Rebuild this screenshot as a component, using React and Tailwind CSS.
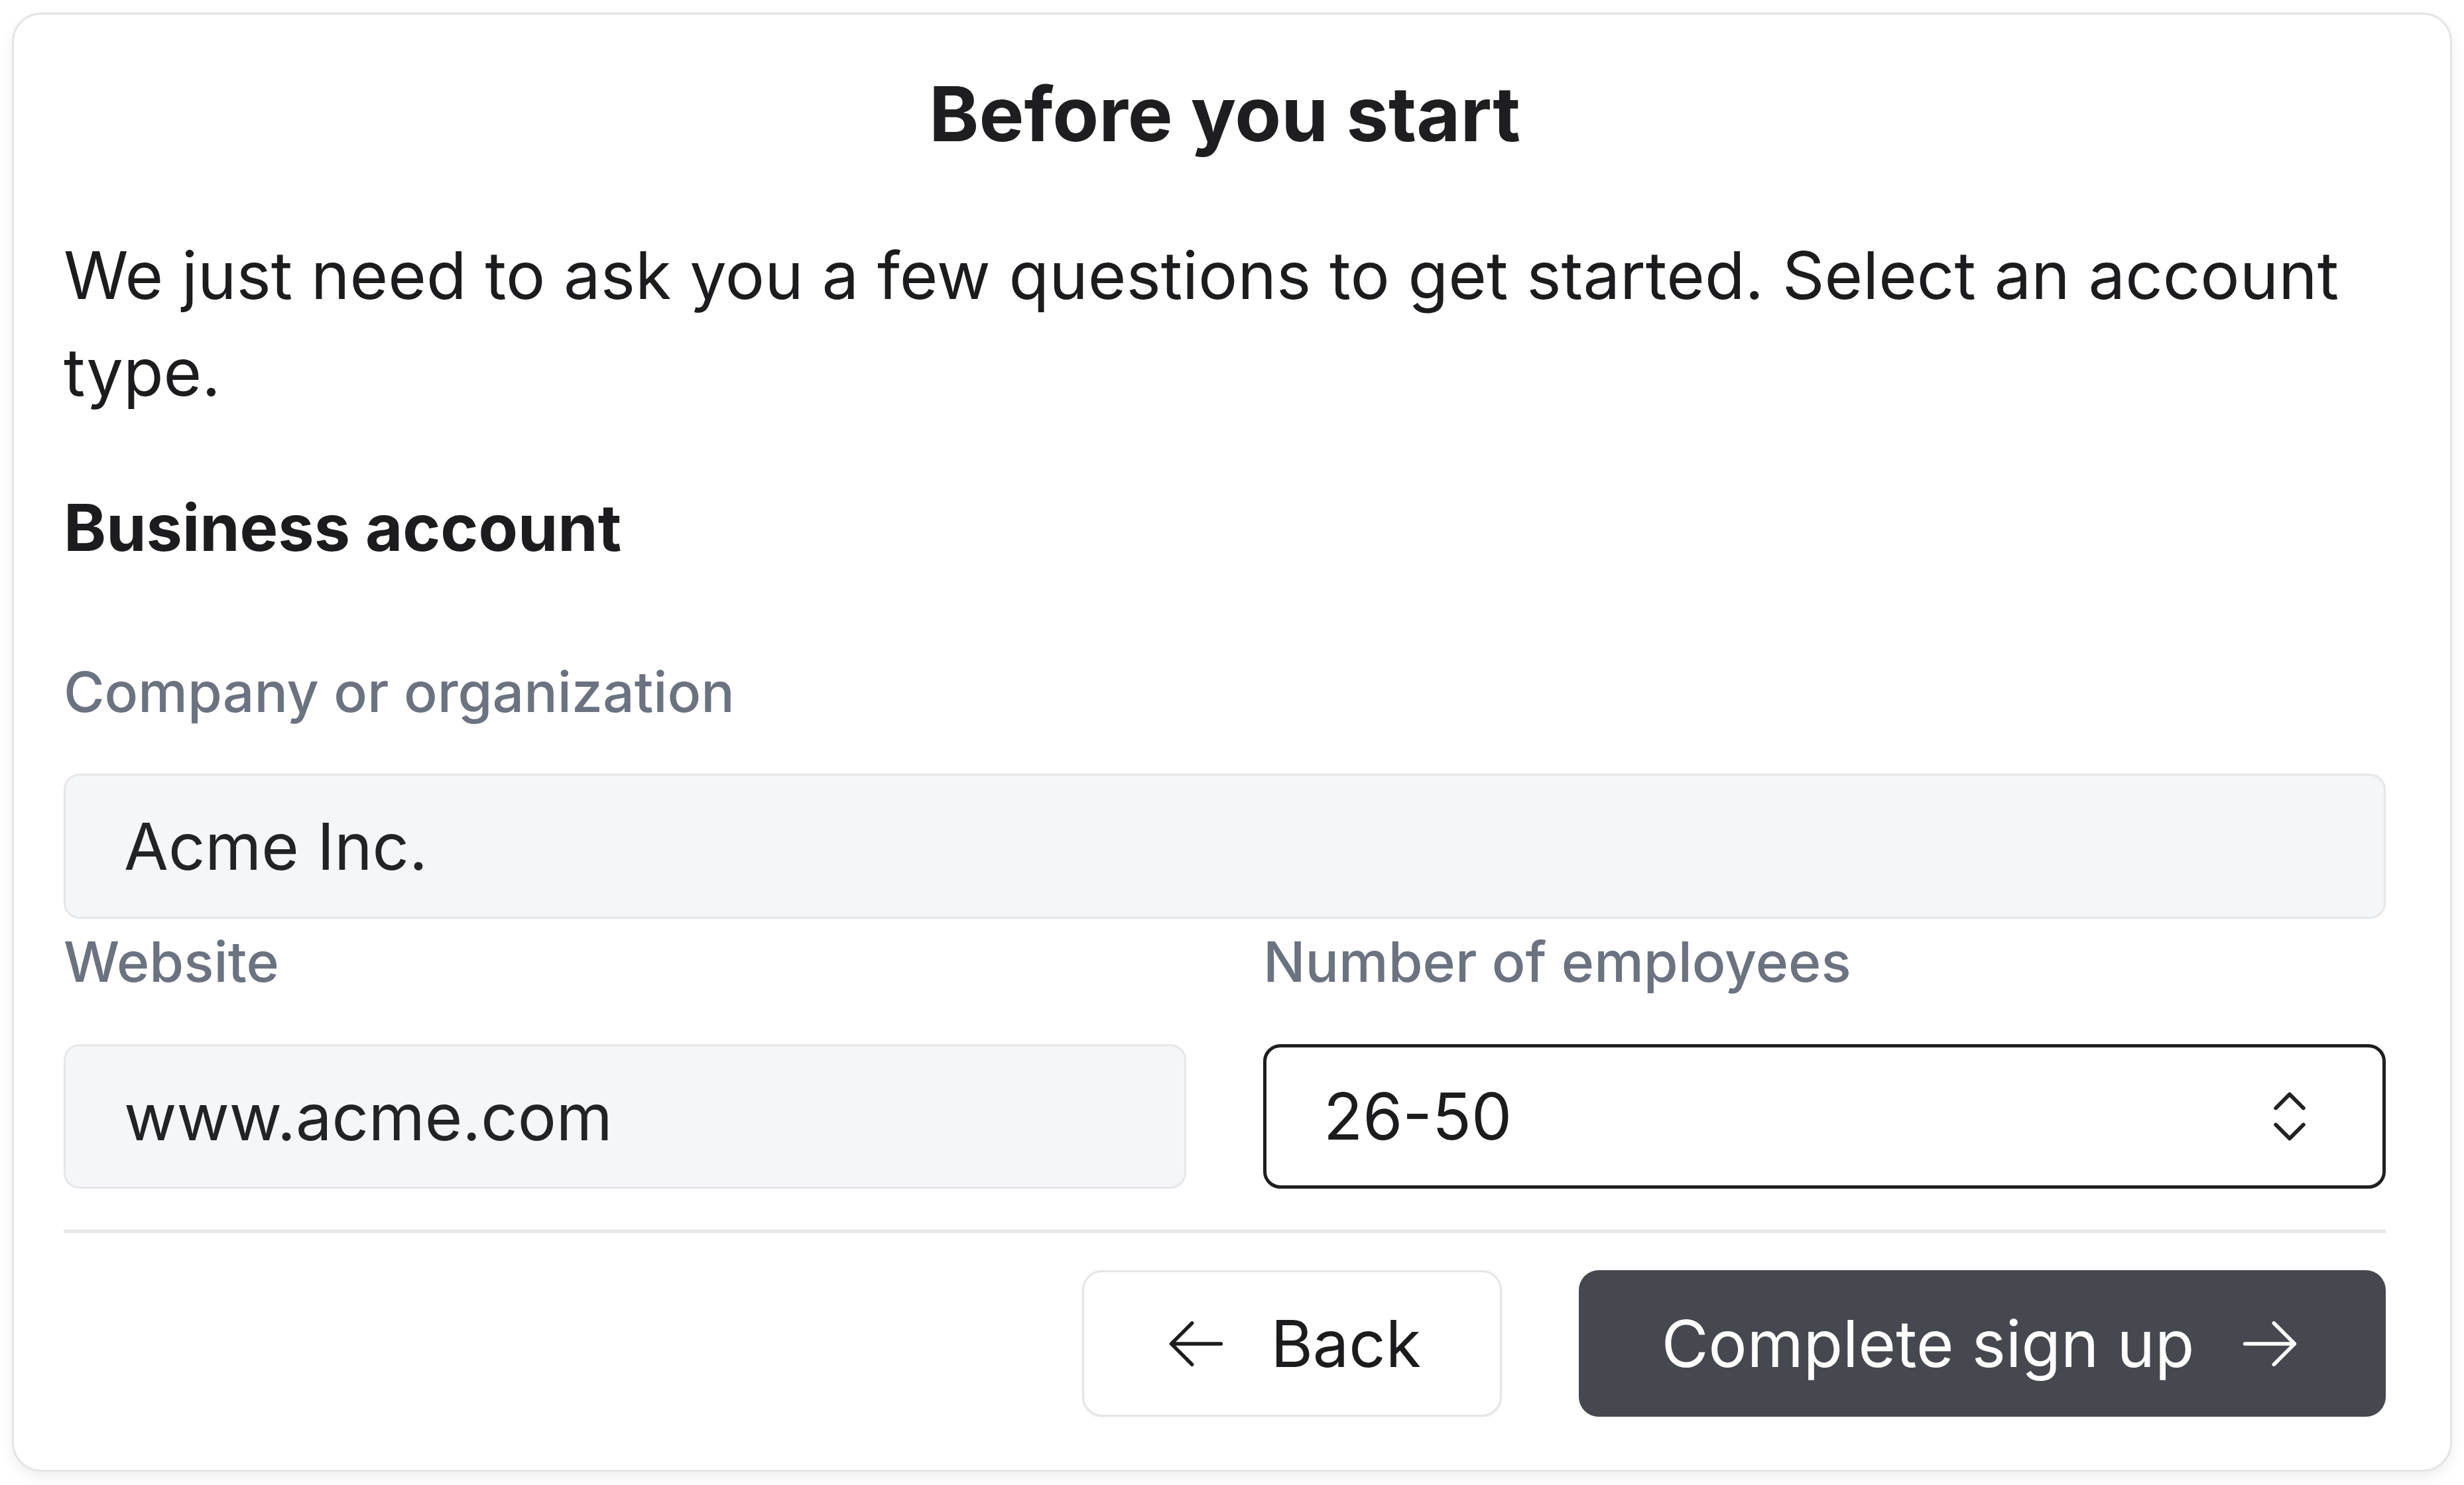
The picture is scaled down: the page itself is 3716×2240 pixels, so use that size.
import { ChevronsUpDown } from "lucide-react";

function ArrowLeftIcon({ className }) {
  return (
    <svg
      viewBox="0 0 24 24"
      fill="none"
      stroke="currentColor"
      strokeWidth={1.3}
      strokeLinecap="round"
      strokeLinejoin="round"
      className={className}
    >
      <path d="M10.5 19.5 3 12m0 0 7.5-7.5M3 12h18" />
    </svg>
  );
}

function ArrowRightIcon({ className }) {
  return (
    <svg
      viewBox="0 0 24 24"
      fill="none"
      stroke="currentColor"
      strokeWidth={1.3}
      strokeLinecap="round"
      strokeLinejoin="round"
      className={className}
    >
      <path d="M13.5 4.5 21 12m0 0-7.5 7.5M21 12H3" />
    </svg>
  );
}

function FieldLabel({ children, className = "" }) {
  return (
    <label
      className={`block text-[84px] leading-[122px] font-medium text-[#6b7280] ${className}`}
    >
      {children}
    </label>
  );
}

function TextInput({ value, height = "h-[219px]" }) {
  return (
    <input
      type="text"
      readOnly
      defaultValue={value}
      className={`block ${height} w-full rounded-[24px] border-[3px] border-[#e6e7ea] bg-[#f5f6f8] pl-[88px] pr-[40px] text-[97px] text-[#222326] outline-none`}
    />
  );
}

export default function App() {
  return (
    <div
      className="min-h-screen bg-white pt-[19px]"
      style={{ fontFamily: "Inter, 'Noto Sans', sans-serif" }}
    >
      <div className="mx-[18px] rounded-[44px] border-[3px] border-[#e4e4e6] bg-white pb-[80px] pl-[75px] pr-[97px] pt-[80px] shadow-[0_8px_20px_rgba(0,0,0,0.07)]">
        <h1 className="text-center text-[114px] leading-[140px] font-bold text-[#1e1e20]">
          Before you start
        </h1>

        <p className="mt-[100px] text-[99px] leading-[146px] text-[#1c1c1e]">
          We just need to ask you a few questions to get started. Select an
          account type.
        </p>

        <h2 className="mt-[89px] text-[97px] leading-[146px] font-bold text-[#1c1c1e]">
          Business account
        </h2>

        <FieldLabel className="mt-[114px]">Company or organization</FieldLabel>
        <div className="mt-[62px]">
          <TextInput value="Acme Inc." />
        </div>

        <div className="grid grid-cols-2 gap-x-[116px]">
          <div>
            <FieldLabel className="mt-[4px]">Website</FieldLabel>
            <div className="mt-[63px]">
              <TextInput value="www.acme.com" height="h-[218px]" />
            </div>
          </div>
          <div>
            <FieldLabel className="mt-[4px]">Number of employees</FieldLabel>
            <div className="mt-[63px]">
              <button
                type="button"
                className="flex h-[218px] w-full items-center justify-between rounded-[26px] border-[5px] border-[#1f1f21] bg-white pl-[86px] pr-[90px] text-left text-[97px] text-[#1c1c1e]"
              >
                <span>26-50</span>
                <ChevronsUpDown size={100} strokeWidth={1.4} className="text-[#222]" />
              </button>
            </div>
          </div>
        </div>

        <div className="mt-[62px] h-[5px] bg-[#e6e7ea]" />

        <div className="mt-[56px] flex items-center justify-end gap-[116px]">
          <button
            type="button"
            className="flex h-[221px] items-center gap-[62px] whitespace-nowrap rounded-[30px] border-[3px] border-[#e4e5e8] bg-white px-[119px] text-[97px] text-[#1c1c1e] shadow-[0_2px_4px_rgba(0,0,0,0.04)]"
          >
            <ArrowLeftIcon className="size-[100px] shrink-0" />
            <span>Back</span>
          </button>
          <button
            type="button"
            className="flex h-[221px] w-[1217px] items-center justify-center gap-[64px] whitespace-nowrap rounded-[30px] bg-[#45484f] px-[60px] text-[97px] text-white"
          >
            <span>Complete sign up</span>
            <ArrowRightIcon className="size-[100px] shrink-0" />
          </button>
        </div>
      </div>
    </div>
  );
}
